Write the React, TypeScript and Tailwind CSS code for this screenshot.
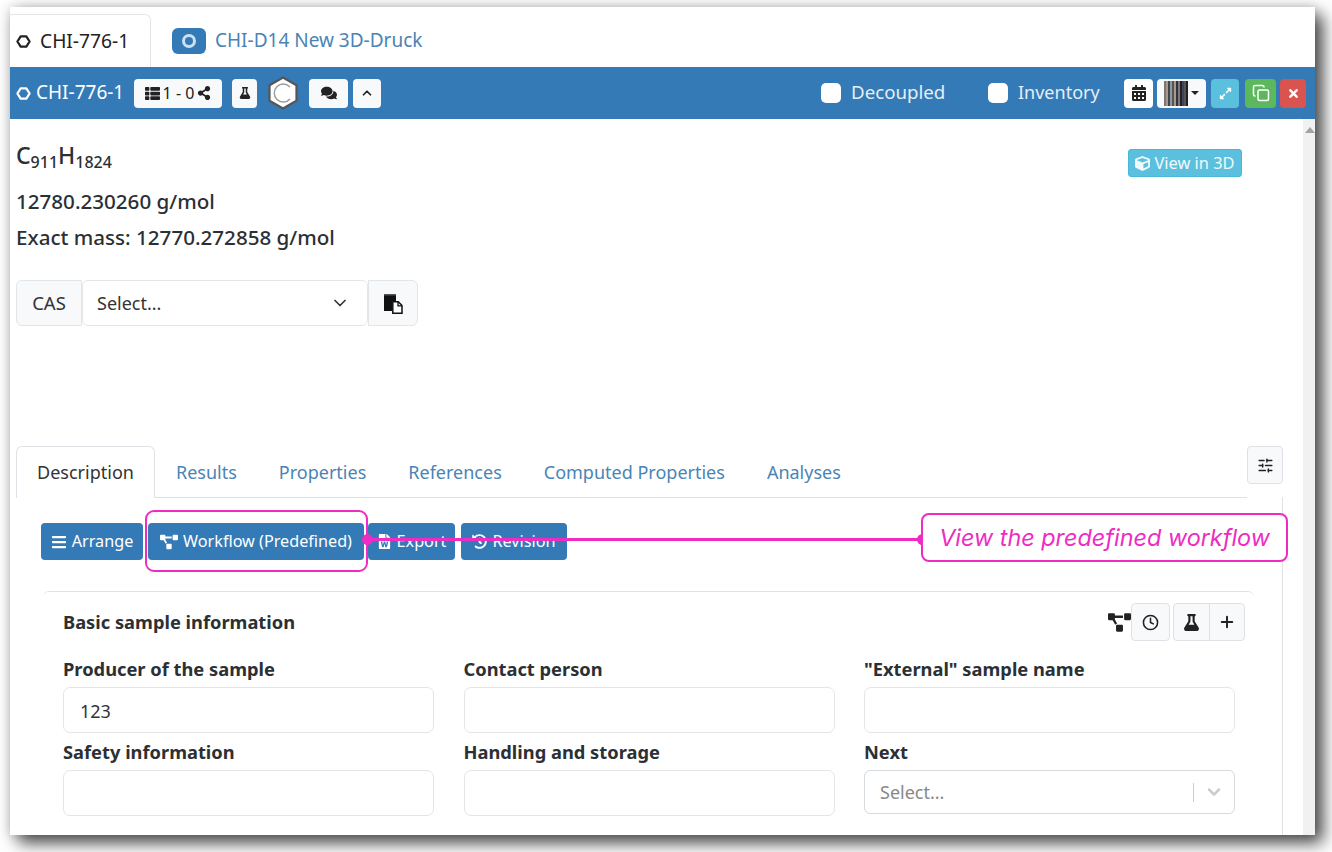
import { ChevronDown, ChevronUp, Clock, Copy, Plus, SlidersHorizontal } from "lucide-react";
import {
  FaBars,
  FaCalendarAlt,
  FaComments,
  FaCube,
  FaExpandAlt,
  FaFileWord,
  FaFlask,
  FaHistory,
  FaProjectDiagram,
  FaShareAlt,
  FaThList,
  FaTimes,
} from "react-icons/fa";

function Ring({ className }: { className: string }) {
  return (
    <svg viewBox="0 0 16 16" className={className} fill="none" stroke="currentColor" strokeWidth="2.4">
      <path d="M5 2.500h6L14.500 8 11 13.500H5L1.500 8z" strokeLinejoin="round" />
    </svg>
  );
}

function Hexagon() {
  return (
    <svg viewBox="0 0 34 34" className="h-[34px] w-[34px]">
      <path d="M17 1.500 30.500 9.300v15.400L17 32.500 3.500 24.700V9.300z" fill="#fff" stroke="#555" strokeWidth="2.200" />
      <path d="M24 11a9 9 0 1 0 0 12" fill="none" stroke="#999" strokeWidth="1.400" />
    </svg>
  );
}

function PasteIcon() {
  return (
    <svg viewBox="0 0 20 22" className="h-[22px] w-[20px]">
      <path d="M1 2h12v2H1z" fill="#555" />
      <path d="M1 3.500h12V9H9v10H1z" fill="#111" />
      <path d="M9.800 9.800h5.500l3.700 3.700v7.700H9.800z" fill="#fff" stroke="#111" strokeWidth="1.500" />
      <path d="M15 9.800v4h4" fill="none" stroke="#111" strokeWidth="1.300" />
    </svg>
  );
}

function Barcode() {
  const bars = ["#777", "#a98", "#444", "#89a", "#555", "#a98", "#333", "#778", "#222", "#445", "#555", "#222"];
  return (
    <span className="flex h-[25px] items-stretch">
      {bars.map((c, i) => (
        <span key={i} className="w-[2px]" style={{ backgroundColor: c }} />
      ))}
    </span>
  );
}

function Field({ label, value }: { label: string; value?: string }) {
  return (
    <div className="flex w-[371px] flex-col">
      <label className="h-[36px] text-[18.3px] leading-[36px] font-bold text-[#2b3035]">{label}</label>
      <div className="h-[46px] rounded-[7px] border border-[#e2e6e9] bg-white px-4 text-[18px] leading-[46px] text-[#333]">
        {value}
      </div>
    </div>
  );
}

function BlueButton({ icon, label, width }: { icon: React.ReactNode; label: string; width: string }) {
  return (
    <button className={`flex h-[37px] items-center justify-center gap-[5px] rounded-[4px] bg-[#337ab7] text-[16.2px] text-white ${width}`}>
      {icon}
      {label}
    </button>
  );
}

export default function App() {
  return (
    <div className="relative h-[852px] w-[1332px] overflow-hidden bg-white pt-[7px] pl-[10px] font-['Noto_Sans','Open_Sans',sans-serif]">
      <div className="flex h-[828px] w-[1305px] flex-col overflow-hidden bg-white shadow-[0_0_12px_rgba(0,0,0,0.18),8px_8px_16px_rgba(0,0,0,0.7)]">
        {/* top tabs */}
        <div className="flex h-[60px] shrink-0 items-end">
          <div className="flex h-[53px] w-[141px] items-center gap-[9px] rounded-tr-md border-t border-r border-[#e3e6e8] pl-[6px] text-[19.2px] text-[#222]">
            <Ring className="h-[15px] w-[15px]" />
            CHI-776-1
          </div>
          <div className="ml-[21px] flex h-[53px] items-center gap-[9px] text-[19px] text-[#4a84b5]">
            <span className="flex h-[26px] w-[34px] items-center justify-center rounded-md bg-[#337ab7]">
              <span className="h-[14px] w-[14px] rounded-full border-[3px] border-[#cfe0ef]" />
            </span>
            CHI-D14 New 3D-Druck
          </div>
        </div>

        {/* sample header bar */}
        <div className="flex h-[52px] shrink-0 items-center bg-[#337ab7] pr-[9px] pl-[6px] text-white">
          <Ring className="h-[15px] w-[15px]" />
          <span className="mb-[2px] ml-[5px] w-[88px] text-[19px] whitespace-nowrap">CHI-776-1</span>
          <div className="ml-[10px] flex h-[29px] w-[88px] items-center justify-center gap-[3px] rounded-[4px] bg-[#f8f9fa] text-[16px] text-[#222]">
            <FaThList className="h-[15px] w-[15px]" />1 - 0
            <FaShareAlt className="h-[14px] w-[14px]" />
          </div>
          <div className="ml-[10px] flex h-[29px] w-[25px] items-center justify-center rounded-[4px] bg-[#f8f9fa] text-[#222]">
            <FaFlask className="h-[12px] w-[12px]" />
          </div>
          <span className="ml-[9px]">
            <Hexagon />
          </span>
          <div className="ml-[9px] flex h-[29px] w-[39px] items-center justify-center rounded-[4px] bg-[#f8f9fa] text-[#222]">
            <FaComments className="h-[16px] w-[16px]" />
          </div>
          <div className="ml-[5px] flex h-[29px] w-[28px] items-center justify-center rounded-[4px] bg-[#f8f9fa] text-[#222]">
            <ChevronUp className="h-[14px] w-[14px]" strokeWidth={3} />
          </div>

          <span className="ml-auto h-[20px] w-[20px] rounded-[5px] bg-white" />
          <span className="mb-[2px] ml-[10px] w-[93px] text-[18.7px] whitespace-nowrap text-[#e6eef5]">Decoupled</span>
          <span className="ml-[44px] h-[20px] w-[20px] rounded-[5px] bg-white" />
          <span className="mb-[2px] ml-[10px] w-[81px] text-[18px] whitespace-nowrap text-[#e6eef5]">Inventory</span>

          <div className="ml-[25px] flex h-[29px] w-[29px] items-center justify-center rounded-[4px] bg-white text-[#222]">
            <FaCalendarAlt className="h-[16px] w-[16px]" />
          </div>
          <div className="ml-[4px] flex h-[29px] w-[49px] items-center justify-center gap-[3px] rounded-[4px] bg-[#f8f9fa] text-[#222]">
            <Barcode />
            <span className="h-0 w-0 border-x-[4px] border-t-[4px] border-x-transparent border-t-[#222]" />
          </div>
          <div className="ml-[5px] flex h-[29px] w-[28px] items-center justify-center rounded-[4px] bg-[#5bc0de]">
            <FaExpandAlt className="h-[13px] w-[13px]" />
          </div>
          <div className="ml-[6px] flex h-[29px] w-[31px] items-center justify-center rounded-[4px] bg-[#5cb85c]">
            <Copy className="h-[18px] w-[18px]" strokeWidth={2} />
          </div>
          <div className="ml-[4px] flex h-[29px] w-[26px] items-center justify-center rounded-[4px] bg-[#d9534f]">
            <FaTimes className="h-[13px] w-[13px]" />
          </div>
        </div>

        <div className="flex min-h-0 flex-1">
          {/* page content */}
          <div className="min-w-0 flex-1 pl-[6px]">
            <div className="flex justify-between pt-[20px] pr-[61px]">
              <div className="text-[20.6px] leading-[36px] font-medium text-[#2b3035]">
                <div className="h-[36px] text-[23px] leading-[32px]">
                  C<sub className="text-[16px]">911</sub>H<sub className="text-[16px]">1824</sub>
                </div>
                <div className="mt-[8px]">12780.230260 g/mol</div>
                <div>Exact mass: 12770.272858 g/mol</div>
              </div>
              <button className="mt-[10px] flex h-[28px] w-[114px] items-center justify-center gap-[4px] rounded-[3px] border border-[#46b8da] bg-[#5bc0de] text-[16.4px] text-[#f0f9fc]">
                <FaCube className="h-[15px] w-[15px]" />
                View in 3D
              </button>
            </div>

            {/* CAS select */}
            <div className="mt-[25px] flex h-[46px] w-[402px] text-[18px] text-[#333]">
              <div className="flex w-[66px] items-center justify-center rounded-l-md border border-[#e2e6e9] bg-[#f8f9fa] text-[18.5px]">CAS</div>
              <div className="flex w-[286px] items-center justify-between rounded-md border border-[#e2e6e9] bg-white pr-[17px] pl-[14px]">
                Select...
                <ChevronDown className="h-[20px] w-[20px]" strokeWidth={2} />
              </div>
              <div className="flex w-[50px] items-center justify-center rounded-r-md border border-[#e2e6e9] bg-[#f8f9fa]">
                <PasteIcon />
              </div>
            </div>

            {/* section tabs */}
            <div className="mt-[120px] flex h-[51px] items-start">
              <div className="flex h-[52px] w-[1231px] items-stretch border-b border-[#dee2e6] text-[18px] text-[#4a84b5]">
                <div className="flex h-[52px] w-[139px] items-center justify-center rounded-t-md border-x border-t border-[#dee2e6] bg-white text-[#333]">
                  Description
                </div>
                <div className="ml-[21px] flex items-center pt-[2px]">Results</div>
                <div className="ml-[42px] flex items-center pt-[2px]">Properties</div>
                <div className="ml-[42px] flex items-center pt-[2px]">References</div>
                <div className="ml-[42px] flex items-center pt-[2px]">Computed Properties</div>
                <div className="ml-[42px] flex items-center pt-[2px]">Analyses</div>
              </div>
              <div className="flex h-[38px] w-[36px] items-center justify-center rounded-[4px] border border-[#dee2e6] bg-[#f8f9fa] text-[#222]">
                <SlidersHorizontal className="h-[17px] w-[17px]" />
              </div>
            </div>

            <div className="mr-[20px] h-[339px] border-r border-[#dee2e6] pt-[26px] pl-[25px]">
              <div className="flex gap-[5px]">
                <BlueButton icon={<FaBars className="h-[16px] w-[16px]" />} label="Arrange" width="w-[102px]" />
                <BlueButton icon={<FaProjectDiagram className="h-[18px] w-[18px]" />} label="Workflow (Predefined)" width="w-[216px]" />
                <div className="-ml-px">
                  <BlueButton icon={<FaFileWord className="h-[15px] w-[15px]" />} label="Export" width="w-[87px]" />
                </div>
                <div className="ml-px">
                  <BlueButton icon={<FaHistory className="h-[15px] w-[15px]" />} label="Revision" width="w-[106px]" />
                </div>
              </div>

              {/* basic sample card */}
              <div className="mt-[31px] ml-[2px] w-[1211px] rounded-t-md border-t border-[#dee2e6] pt-[11px] pr-[9px] pl-[20px]">
                <div className="flex h-[38px] items-center justify-between text-[#222]">
                  <span className="text-[18.3px] font-bold text-[#2b3035]">Basic sample information</span>
                  <div className="flex items-center">
                    <FaProjectDiagram className="h-[23px] w-[23px]" />
                    <div className="flex h-[38px] w-[39px] items-center justify-center rounded-[4px] border border-[#dee2e6] bg-[#f8f9fa]">
                      <Clock className="h-[17px] w-[17px]" strokeWidth={2.2} />
                    </div>
                    <div className="ml-[3px] flex h-[38px] w-[72px] rounded-[4px] border border-[#dee2e6] bg-[#f8f9fa]">
                      <div className="flex w-[36px] items-center justify-center border-r border-[#dee2e6]">
                        <FaFlask className="h-[17px] w-[17px]" />
                      </div>
                      <div className="flex flex-1 items-center justify-center">
                        <Plus className="h-[18px] w-[18px]" strokeWidth={2.6} />
                      </div>
                    </div>
                  </div>
                </div>

                <div className="grid w-[1172px] grid-cols-[371px_371px_371px] gap-x-[29.5px] gap-y-px pt-[10px]">
                  <Field label="Producer of the sample" value="123" />
                  <Field label="Contact person" />
                  <Field label={'"External" sample name'} />
                  <Field label="Safety information" />
                  <Field label="Handling and storage" />
                  <div className="flex w-[371px] flex-col">
                    <label className="h-[36px] text-[18.3px] leading-[36px] font-bold text-[#2b3035]">Next</label>
                    <div className="flex h-[44px] items-center rounded-md border border-[#d5dade] bg-white pr-[10px] pl-[15px] text-[18px] text-[#888]">
                      <span className="flex-1">Select...</span>
                      <span className="h-[19px] w-px bg-[#ccc]" />
                      <ChevronDown className="ml-[10px] h-[20px] w-[20px] text-[#ccc]" strokeWidth={3} />
                    </div>
                  </div>
                </div>
              </div>
            </div>
          </div>

          {/* scrollbar */}
          <div className="relative w-[12px] shrink-0 bg-[#f1f1f1]">
            <span className="absolute top-[8px] left-[2px] h-0 w-0 border-x-[5px] border-b-[6px] border-x-transparent border-b-[#a3a3a3]" />
          </div>
        </div>
      </div>

      {/* pink annotation */}
      <div className="absolute top-[510px] left-[145px] h-[62px] w-[223px] rounded-[9px] border-[2.5px] border-[#ee2cc4]" />
      <div className="absolute top-[538px] left-[367px] h-[3px] w-[555px] bg-[#ee2cc4]" />
      <div className="absolute top-[534px] left-[362px] h-[11px] w-[11px] rounded-full bg-[#ee2cc4]" />
      <div className="absolute top-[534px] left-[917px] h-[11px] w-[11px] rounded-full bg-[#ee2cc4]" />
      <div className="absolute top-[513px] left-[921px] flex h-[49px] w-[367px] items-center justify-center rounded-[8px] border-[2.5px] border-[#ee2cc4] bg-white font-['Inter',sans-serif] text-[23.4px] text-[#ee2cc4] italic">
        View the predefined workflow
      </div>
    </div>
  );
}
